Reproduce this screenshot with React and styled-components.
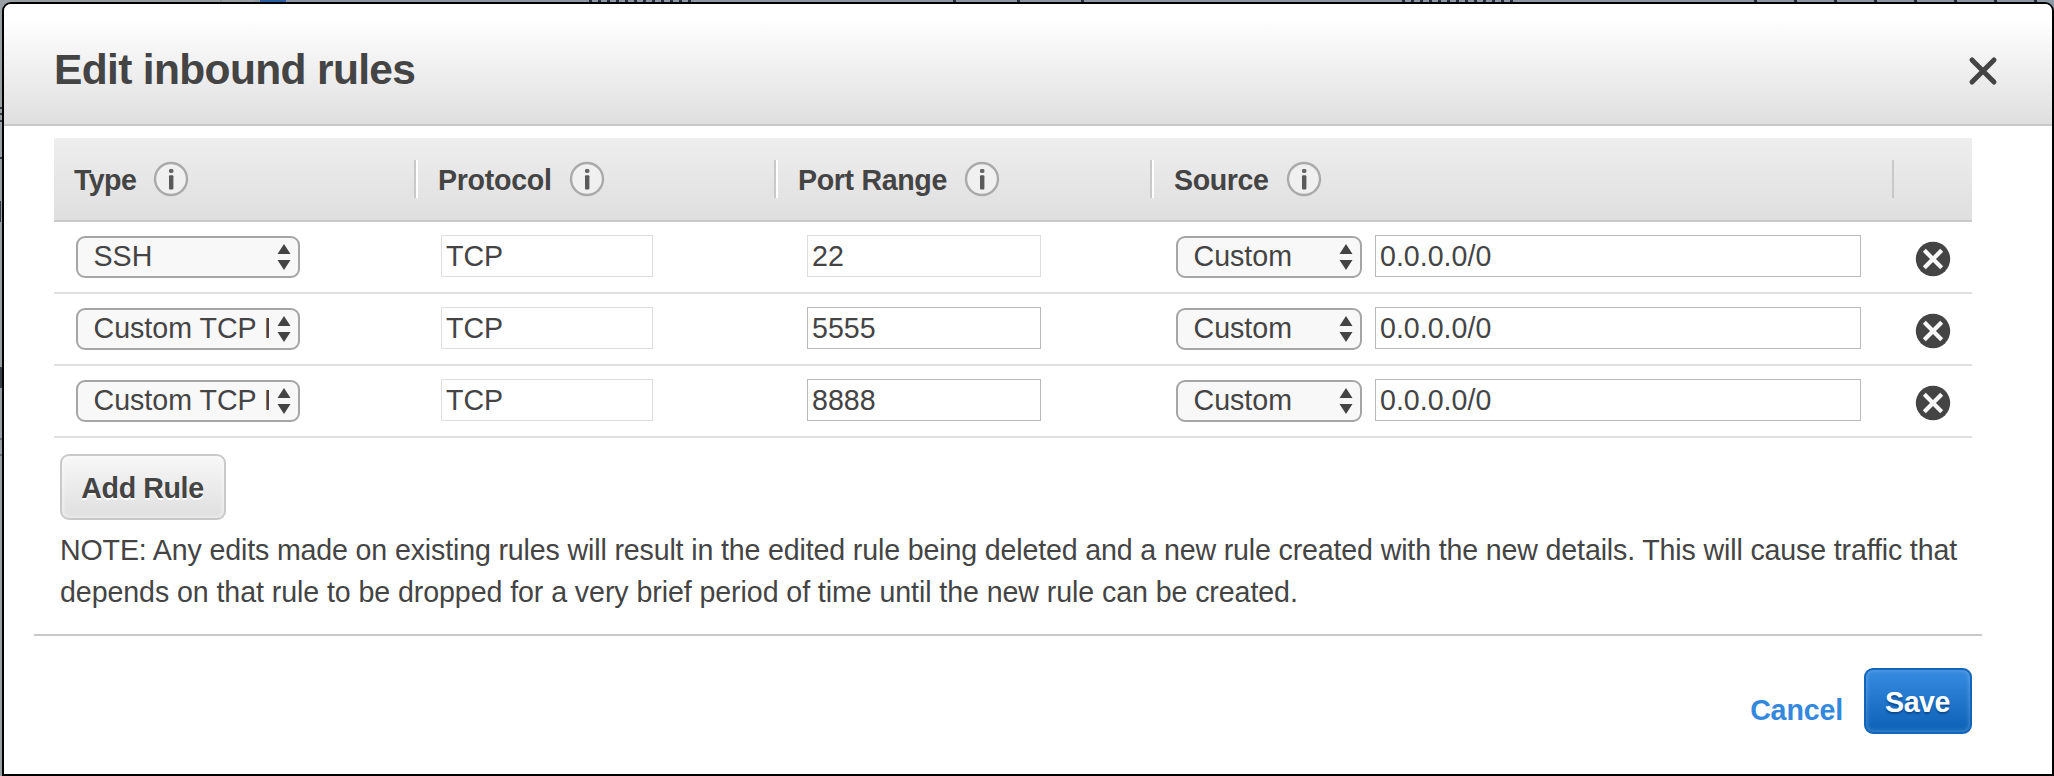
import React from "react";
import styled, { createGlobalStyle } from "styled-components";

const GlobalStyle = createGlobalStyle`
  * { box-sizing: border-box; }
  body { margin: 0; background: #8d98a7; }
  button, input { font: inherit; color: inherit; letter-spacing: inherit; }
`;

/* The dimmed console behind the dialog shows only as a thin strip at the top and left. */
const Page = styled.div`
  width: 2054px;
  height: 776px;
  padding: 2px 0 0 2px;
  overflow: hidden;
  background:
    linear-gradient(#343b45, #343b45) 0 107px / 2px 2px no-repeat,
    linear-gradient(#343b45, #343b45) 0 113px / 2px 2px no-repeat,
    linear-gradient(#343b45, #343b45) 0 120px / 2px 2px no-repeat,
    linear-gradient(#343b45, #343b45) 0 157px / 2px 2px no-repeat,
    linear-gradient(#343b45, #343b45) 0 201px / 1px 21px no-repeat,
    linear-gradient(#363e48, #363e48) 0 367px / 2px 21px no-repeat,
    linear-gradient(#6a717b, #6a717b) 0 438px / 2px 2px no-repeat,
    linear-gradient(#6a717b, #6a717b) 0 454px / 2px 2px no-repeat,
    linear-gradient(#2d5f9e, #2d5f9e) 260px 0 / 26px 2px no-repeat,
    repeating-linear-gradient(to right, #28303b 0 3px, #8d98a7 3px 9px) 589px 0 / 106px 2px no-repeat,
    repeating-linear-gradient(to right, #28303b 0 3px, #8d98a7 3px 64px) 953px 0 / 180px 2px no-repeat,
    repeating-linear-gradient(to right, #28303b 0 3px, #8d98a7 3px 9px) 1402px 0 / 114px 2px no-repeat,
    repeating-linear-gradient(to right, #28303b 0 3px, #8d98a7 3px 40px) 1754px 0 / 298px 2px no-repeat,
    linear-gradient(to right, #9a9fa5 0 220px, #858b92 220px 222px, #9a9fa5 222px 255px, #8d98a7 255px);
  font-family: "Liberation Sans", Arial, sans-serif;
  font-size: 28.6px;
  color: #444;
`;

const Dialog = styled.section`
  height: 774px;
  border: 2px solid #000;
  border-radius: 9px 9px 0 0;
  background: #fff;
  overflow: hidden;
`;

const DialogHeader = styled.header`
  display: flex;
  align-items: center;
  justify-content: space-between;
  height: 122px;
  padding: 0 54px 0 50px;
  border-bottom: 2px solid #c8c8c8;
  background: linear-gradient(#fff 12%, #dfdfdf);
`;

const Title = styled.h1`
  margin: 12px 0 0;
  font-size: 42.5px;
  line-height: 50px;
  letter-spacing: -0.65px;
`;

const CloseButton = styled.button`
  display: flex;
  margin-top: 14px;
  padding: 0;
  border: 0;
  background: none;
`;

const Rules = styled.div`
  width: 1918px;
  margin: 12px 0 0 50px;
`;

const HeadRow = styled.div`
  display: flex;
  align-items: center;
  height: 84px;
  border-bottom: 2px solid #c9c9c9;
  background: linear-gradient(#eee, #dfdfdf);
`;

const HeadCell = styled.div`
  display: flex;
  align-items: center;
  gap: 17px;
  width: ${(p) => p.$width}px;
  height: 38px;
  padding-left: ${(p) => (p.$first ? 20 : 22)}px;
  border-left: ${(p) => (p.$first ? "0" : "2px solid #c8c8c8")};
  box-shadow: ${(p) => (p.$first || p.$last ? "none" : "inset 2px 0 #fff")};
  font-weight: bold;
  letter-spacing: ${(p) => p.$spacing || 0}px;
`;

const HeadLabel = styled.span`
  margin-top: 2px;
  white-space: nowrap;
`;

const RuleRow = styled.div`
  display: flex;
  align-items: flex-start;
  height: 72px;
  padding: 13px 0 0 22px;
  border-bottom: 2px solid #dfdfdf;
`;

const SelectBox = styled.div`
  display: flex;
  align-items: center;
  justify-content: space-between;
  width: ${(p) => p.$width}px;
  height: 42px;
  margin-top: 1px;
  margin-right: ${(p) => p.$after}px;
  padding: 0 7px 0 15.5px;
  border: 2px solid #a5a5a5;
  border-radius: 9px;
  background: #f8f8f8;
`;

const SelectLabel = styled.span`
  width: ${(p) => p.$width}px;
  overflow: hidden;
  white-space: nowrap;
  line-height: 36px;
  margin-top: -3px;
`;

const Field = styled.input`
  width: ${(p) => p.$width}px;
  height: 42px;
  margin-right: ${(p) => p.$after}px;
  padding: 0 4px;
  border: 1px solid ${(p) => (p.$disabled ? "#ddd" : "#b9b9b9")};
  border-radius: 0;
  background: #fff;
  outline: none;
`;

const RemoveButton = styled.button`
  display: flex;
  margin-top: 6px;
  padding: 0;
  border: 0;
  background: none;
`;

const Below = styled.div`
  padding: 16px 0 0 56px;
`;

const Button = styled.button`
  width: ${(p) => p.$width}px;
  height: 66px;
  padding: 2px 1px 0 0;
  border: 2px solid ${(p) => (p.$primary ? "#1166bb" : "#c9c9c9")};
  border-radius: 9px;
  background: ${(p) => (p.$primary ? "linear-gradient(#3287dd 12%, #1166bb 88%)" : "linear-gradient(#f7f7f7, #dfdfdf)")};
  box-shadow: inset 0 0 5px ${(p) => (p.$primary ? "rgba(255,255,255,.3)" : "rgba(255,255,255,.8)")};
  color: ${(p) => (p.$primary ? "#fff" : "#444")};
  font-weight: bold;
  letter-spacing: ${(p) => p.$spacing}px;
  text-shadow: ${(p) => (p.$primary ? "0 2px 2px #0a4a90" : "0 2px 0 #fff")};
`;

const Note = styled.p`
  margin: 9px 0 0;
  line-height: 42px;
  white-space: nowrap;
`;

const NoteLine = styled.span`
  display: block;
  letter-spacing: ${(p) => p.$spacing}px;
`;

const Footer = styled.footer`
  display: flex;
  justify-content: flex-end;
  align-items: flex-start;
  gap: 21px;
  width: 1948px;
  margin: 21px 0 0 30px;
  padding: 32px 10px 0 0;
  border-top: 2px solid #c9c9c9;
`;

const Cancel = styled.a`
  margin-top: 25px;
  line-height: 34px;
  color: #3388dd;
  font-weight: bold;
  letter-spacing: -0.15px;
`;

const CloseIcon = () => (
  <svg width="30" height="30" viewBox="0 0 30 30">
    <path d="M4 4L26 26M26 4L4 26" stroke="#444" strokeWidth="5" strokeLinecap="round" />
  </svg>
);

const InfoIcon = () => (
  <svg width="36" height="36" viewBox="0 0 36 36">
    <circle cx="18" cy="18" r="16" fill="#f0f0f0" stroke="#aaa" strokeWidth="2.4" />
    <rect x="16" y="8" width="4.4" height="4" rx="1.4" fill="#666" />
    <rect x="16" y="14.2" width="4.4" height="14.2" rx="1" fill="#5a5a5a" />
  </svg>
);

const RemoveIcon = () => (
  <svg width="36" height="36" viewBox="0 0 36 36">
    <circle cx="18" cy="18" r="17.2" fill="#444" />
    <path d="M10.8 10.8L25.2 25.2M25.2 10.8L10.8 25.2" stroke="#f8f8f8" strokeWidth="4.2" strokeLinecap="square" />
  </svg>
);

const Arrows = () => (
  <svg width="14" height="26" viewBox="0 0 14 26">
    <path d="M7 0L13.5 10H0.5ZM7 26L0.5 16H13.5Z" fill="#444" />
  </svg>
);

const rules = [
  { type: "SSH", protocol: "TCP", port: "22", fixedPort: true, source: "Custom", cidr: "0.0.0.0/0" },
  { type: "Custom TCP Rule", protocol: "TCP", port: "5555", source: "Custom", cidr: "0.0.0.0/0" },
  { type: "Custom TCP Rule", protocol: "TCP", port: "8888", source: "Custom", cidr: "0.0.0.0/0" },
];

const columns = [
  { label: "Type", width: 360, spacing: -0.6 },
  { label: "Protocol", width: 360, spacing: -0.3 },
  { label: "Port Range", width: 376, spacing: -0.35 },
  { label: "Source", width: 742, spacing: -0.4 },
];

const Select = ({ label, width, labelWidth, after }) => (
  <SelectBox $width={width} $after={after}>
    <SelectLabel $width={labelWidth}>{label}</SelectLabel>
    <Arrows />
  </SelectBox>
);

export default function App() {
  return (
    <Page>
      <GlobalStyle />
      <Dialog>
        <DialogHeader>
          <Title>Edit inbound rules</Title>
          <CloseButton aria-label="Close"><CloseIcon /></CloseButton>
        </DialogHeader>
        <Rules>
          <HeadRow>
            {columns.map((c, i) => (
              <HeadCell key={c.label} $first={i === 0} $width={c.width} $spacing={c.spacing}>
                <HeadLabel>{c.label}</HeadLabel>
                <InfoIcon />
              </HeadCell>
            ))}
            <HeadCell $last $width={80} />
          </HeadRow>
          {rules.map((r, i) => (
            <RuleRow key={i}>
              <Select label={r.type} width={224} labelWidth={175} after={141} />
              <Field $width={212} $after={154} $disabled readOnly value={r.protocol} />
              <Field $width={234} $after={135} $disabled={r.fixedPort} readOnly value={r.port} />
              <Select label={r.source} width={186} labelWidth={120} after={13} />
              <Field $width={486} $after={54} readOnly value={r.cidr} />
              <RemoveButton aria-label="Remove rule"><RemoveIcon /></RemoveButton>
            </RuleRow>
          ))}
        </Rules>
        <Below>
          <Button $width={166} $spacing={-0.4}>Add Rule</Button>
          <Note>
            <NoteLine $spacing={-0.15}>NOTE: Any edits made on existing rules will result in the edited rule being deleted and a new rule created with the new details. This will cause traffic that</NoteLine>
            <NoteLine $spacing={-0.083}>depends on that rule to be dropped for a very brief period of time until the new rule can be created.</NoteLine>
          </Note>
        </Below>
        <Footer>
          <Cancel>Cancel</Cancel>
          <Button $primary $width={108} $spacing={-0.5}>Save</Button>
        </Footer>
      </Dialog>
    </Page>
  );
}
